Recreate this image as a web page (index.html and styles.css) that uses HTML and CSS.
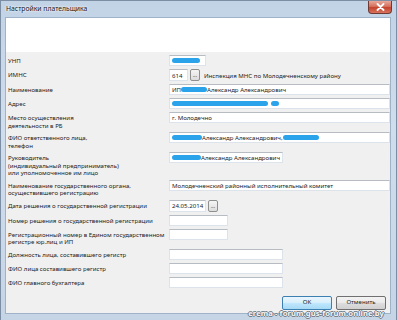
FILE: index.html
```html
<!DOCTYPE html>
<html lang="ru">
<head>
  <meta charset="UTF-8">
  <title>Настройки плательщика</title>
  <link rel="stylesheet" href="styles.css">
</head>
<body>
  <div class="window">
    <div class="titlebar">
      <span class="title">Настройки плательщика</span>
      <div class="close">
        <svg width="9" height="8" viewBox="0 0 9 8"><path d="M1.5 1 L7.5 7 M7.5 1 L1.5 7" stroke="#fff" stroke-width="1.8" stroke-linecap="round"/></svg>
      </div>
    </div>

    <div class="client">
      <div class="banner"></div>

      <div class="form">
        <div class="row">
          <div class="label">УНП</div>
          <div class="field w-short"><span class="blob" style="width:28px"></span></div>
        </div>
        <div class="row">
          <div class="label">ИМНС</div>
          <div class="field w-code tall">614</div>
          <button class="dots tall">...</button>
          <span class="note">Инспекция МНС по Молодечненскому району</span>
        </div>
        <div class="row">
          <div class="label">Наименование</div>
          <div class="field w-full">ИП<span class="blob" style="width:26px"></span>Александр Александрович</div>
        </div>
        <div class="row">
          <div class="label">Адрес</div>
          <div class="field w-full"><span class="blob" style="width:96px"></span><span class="blob" style="width:8px;margin-left:3px"></span></div>
        </div>
        <div class="row">
          <div class="label">Место осуществления<br>деятельности в РБ</div>
          <div class="field w-full">г. Молодечно</div>
        </div>
        <div class="row">
          <div class="label">ФИО ответственного лица,<br>телефон</div>
          <div class="field w-full"><span class="blob" style="width:30px"></span>Александр Александрович, <span class="blob" style="width:36px"></span></div>
        </div>
        <div class="row">
          <div class="label">Руководитель<br>(индивидуальный предприниматель)<br>или уполномоченное им лицо</div>
          <div class="field w-mid"><span class="blob" style="width:30px"></span>Александр Александрович</div>
        </div>
        <div class="row">
          <div class="label">Наименование государственного органа,<br>осуществившего регистрацию</div>
          <div class="field w-full">Молодечненский районный исполнительный комитет</div>
        </div>
        <div class="row">
          <div class="label">Дата решения о государственной регистрации</div>
          <div class="field w-short tall">24.05.2014</div>
          <button class="dots tall">...</button>
        </div>
        <div class="row">
          <div class="label">Номер решения о государственной регистрации</div>
          <div class="field w-num"></div>
        </div>
        <div class="row">
          <div class="label">Регистрационный номер в Едином государственном<br>регистре юр.лиц и ИП</div>
          <div class="field w-num"></div>
        </div>
        <div class="row">
          <div class="label">Должность лица, составившего регистр</div>
          <div class="field w-mid"></div>
        </div>
        <div class="row">
          <div class="label">ФИО лица составившего регистр</div>
          <div class="field w-mid"></div>
        </div>
        <div class="row">
          <div class="label">ФИО главного бухгалтера</div>
          <div class="field w-mid"></div>
        </div>

        <div class="buttons">
          <button class="btn default">OK</button>
          <button class="btn">Отменить</button>
        </div>
      </div>
    </div>

    <div class="watermark">erema - forum.gus-forum.online.by</div>
  </div>
</body>
</html>
```

FILE: styles.css
```css
body {
  margin: 0;
  font-family: 'Noto Sans', 'Open Sans', sans-serif;
  font-size: 6.1px;
  color: #1b1b1b;
}
.window {
  position: relative;
  width: 397px;
  height: 320px;
  box-sizing: border-box;
  display: flex;
  flex-direction: column;
  background: linear-gradient(to bottom, #c2d3e6, #d0dded 40%, #c6d5e6);
  border: 1px solid #7b8ea3;
  border-bottom: none;
  overflow: hidden;
}
.titlebar {
  height: 16px;
  display: flex;
  align-items: center;
  justify-content: space-between;
  padding: 0 4px 0 5px;
}
.title {
  font-size: 6.8px;
  color: #151515;
  text-shadow: 0 0 3px #fff, 0 0 2px #fff;
  margin-top: -1px;
}
.close {
  width: 24px;
  height: 13px;
  margin-top: -3px;
  display: flex;
  align-items: center;
  justify-content: center;
  background: linear-gradient(to bottom, #e9a99c, #d6705e 45%, #c3432e 55%, #d9735e);
  border: 1px solid #6e3a34;
  border-top: none;
  border-radius: 0 0 4px 4px;
  box-sizing: border-box;
}
.client {
  flex: 1;
  margin: 0 5px 6px 4px;
  display: flex;
  flex-direction: column;
  border: 1px solid #9fb2c7;
}
.banner {
  height: 34px;
  background: #fff;
}
.form {
  flex: 1;
  background: #f0f0f0;
  padding: 3px 0 0 2px;
  display: flex;
  flex-direction: column;
  gap: 3px;
}
.row {
  display: flex;
  align-items: flex-start;
}
.label {
  width: 161px;
  flex-shrink: 0;
  line-height: 7.5px;
  padding-top: 2px;
  white-space: nowrap;
}
.field {
  height: 11px;
  box-sizing: border-box;
  background: #fff;
  border: 1px solid #dde3ea;
  border-top-color: #b7bcc2;
  display: flex;
  align-items: center;
  padding: 0 2px;
  white-space: nowrap;
  overflow: hidden;
}
.field.tall, .dots.tall {
  height: 12px;
}
.w-short { width: 37px; }
.w-code { width: 19px; }
.w-num { width: 59px; }
.w-mid { width: 114px; }
.w-full { width: 221px; }
.blob {
  display: inline-block;
  height: 5px;
  background: #2ba3ea;
  border-radius: 3px;
  filter: blur(0.7px);
}
.dots {
  width: 10px;
  margin-left: 2px;
  padding: 0;
  font: inherit;
  font-size: 5px;
  line-height: 6px;
  background: linear-gradient(to bottom, #f5f5f5, #dcdcdc);
  border: 1px solid #8e8f8f;
  border-radius: 2px;
  color: #333;
}
.note {
  margin-left: 4px;
  padding-top: 2px;
  white-space: nowrap;
}
.buttons {
  display: flex;
  justify-content: flex-end;
  gap: 4px;
  margin-top: 5px;
  padding-right: 4px;
}
.btn {
  width: 50px;
  height: 14px;
  padding: 0 0 2px;
  font: inherit;
  background: linear-gradient(to bottom, #f3f3f3, #ebebeb 45%, #dcdcdc 55%, #d0d0d0);
  border: 1px solid #707070;
  border-radius: 2px;
  color: #1b1b1b;
}
.btn.default {
  background: linear-gradient(to bottom, #eaf6fd, #d9f0fc 45%, #bee6fd 55%, #a7d9f5);
  border-color: #3c7fb1;
}
.watermark {
  position: absolute;
  right: 12px;
  bottom: 2px;
  font-size: 7.6px;
  font-weight: bold;
  color: #f4f4f4;
  letter-spacing: 0.1px;
  text-shadow: -1px 0 #6d7a87, 1px 0 #6d7a87, 0 -1px #6d7a87, 0 1px #6d7a87;
}
```
